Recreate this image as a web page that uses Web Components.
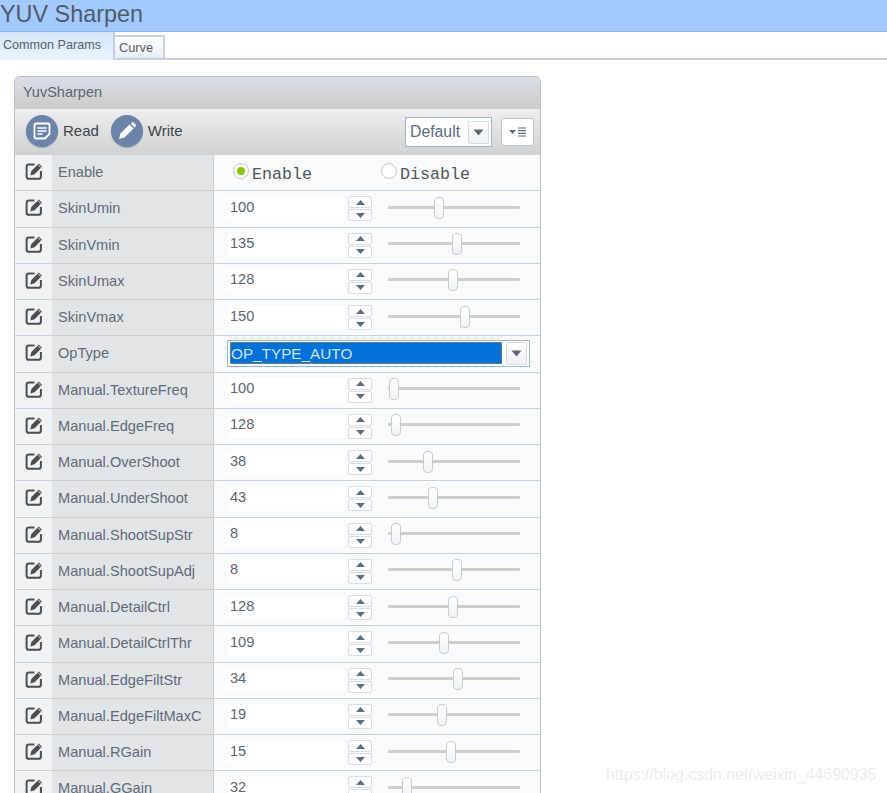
<!DOCTYPE html>
<html><head><meta charset="utf-8"><title>YUV Sharpen</title>
<style>
html,body{margin:0;padding:0;height:793px;overflow:hidden;background:#fff;font-family:"Liberation Sans",Arial,sans-serif}
</style></head><body>
<yuv-app></yuv-app>
<script>
const def=(name,css,html)=>{customElements.define(name,class extends HTMLElement{connectedCallback(){if(this.shadowRoot)return;const r=this.attachShadow({mode:'open'});const get=a=>this.getAttribute(a)||'';r.innerHTML='<style>'+css+'</style>'+(typeof html==='function'?html(get):html);}});};
const editIcon='<svg width="20" height="20" viewBox="0 0 20 20"><path d="M10.500 3.600H5A2.400 2.400 0 0 0 2.600 6v9.400A2.400 2.400 0 0 0 5 17.800h9.500a2.400 2.400 0 0 0 2.400-2.400V10" fill="none" stroke="#4a4f57" stroke-width="2"/><path d="M6.300 14.400l1-4.300L14.800 2.600l3.200 3.200-7.400 7.500z" fill="#4a4f57"/><path d="M14 3.700l3 3" stroke="#fff" stroke-width=".8"/></svg>';

def('title-bar',`:host{display:flex;align-items:center;height:32px;box-sizing:border-box;background:#a2caff;border-bottom:1px solid #8fb6e8;color:#4f5b6b;font-size:23.400px;line-height:28px;padding-bottom:3px}`,'<slot></slot>');

def('tab-item',`:host{display:flex;align-items:center;box-sizing:border-box;font-size:12.600px;color:#56606c}
:host([active]){width:115px;height:28px;padding:0 0 3px 3px;background:linear-gradient(#d4e6fb,#eaf4ff);border-right:2px solid #c3cfdf}
:host(:not([active])){width:50px;height:23px;margin-top:3px;padding:0 0 0 4px;font-size:12.800px;background:linear-gradient(#fff,#e9edf2);border:2px solid #c9d3e2;border-bottom:0;border-left:0}`,'<slot></slot>');

def('tab-bar',`:host{display:flex;align-items:flex-start;height:28px;box-sizing:border-box;border-bottom:2px solid #c5d0e2}`,'<slot></slot>');

def('tool-button',`:host{display:flex;align-items:center;gap:5px;font-size:15px;color:#3f444b}
.c{width:32px;height:32px;border-radius:50%;background:#6d84aa;display:flex;align-items:center;justify-content:center;box-shadow:0 1px 1px #9aa}
.l{position:relative;top:-1px}`,
g=>`<span class="c">${g('icon')==='read'
?'<svg width="18" height="18" viewBox="0 0 18 18"><path d="M3 1.500h12a1.500 1.500 0 0 1 1.500 1.500v9l-4.500 4.500H3A1.500 1.500 0 0 1 1.500 15V3A1.500 1.500 0 0 1 3 1.500z" fill="none" stroke="#fff" stroke-width="1.800"/><path d="M4.500 6h9M4.500 9h9M4.500 12h5" stroke="#fff" stroke-width="1.500"/></svg>'
:'<svg width="20" height="20" viewBox="0 0 20 20"><path d="M2 18l1.500-5.500L12.500 3.500l4 4-9 9z" fill="#fff"/><path d="M13.600 2.400l1.400-1.200a1 1 0 0 1 1.300 0l2.500 2.500a1 1 0 0 1 0 1.300l-1.200 1.400z" fill="#fff"/></svg>'}</span><span class="l"><slot></slot></span>`);

const caret=`<svg width="11" height="7" viewBox="0 0 11 7"><path d="M.5.500h10L5.500 6.500z" fill="#59677a"/></svg>`;

def('drop-box',`:host{display:flex;align-items:center;box-sizing:border-box;border:1px solid #9db5d3;background:#fff;padding:2px;color:#5a6c82;font-size:15.800px}
.t{flex:1;padding-left:2px;line-height:22px;height:22px;white-space:nowrap;overflow:hidden}
:host([selected]) .t{background:#0071d8;color:#cfe4f8;outline:1px dotted #c8882a;outline-offset:-1px;font-size:15.300px;margin-right:4px;line-height:24px;padding-left:1px}
.b{width:21px;height:23px;box-sizing:border-box;border:1px solid #d6dbe2;border-radius:2px;background:linear-gradient(#fff,#eef0f3);display:flex;align-items:center;justify-content:center}`,
`<span class="t"><slot></slot></span><span class="b">${caret}</span>`);

def('menu-button',`:host{display:flex;align-items:center;justify-content:center;gap:2px;width:33px;height:28px;box-sizing:border-box;border:1px solid #bcc3cc;border-radius:3px;background:#fff}`,
`<svg width="20" height="10" viewBox="0 0 20 10"><path d="M1 3h7L4.500 7z" fill="#5c6c82"/><path d="M10 1h8M10 3.700h8M10 6.300h8M10 9h8" stroke="#5c6c82" stroke-width="1.200"/></svg>`);

def('radio-opt',`:host{display:flex;align-items:center;font-family:"Liberation Mono",monospace;font-size:16.670px;color:#4e565e;height:22px}
.r{width:16px;height:16px;box-sizing:border-box;border-radius:50%;border:1px solid #c2c6cb;background:#fff;margin-right:3px;display:flex;align-items:center;justify-content:center;flex:none;position:relative;top:-2px}
:host([checked]) .r::after{content:"";width:8px;height:8px;border-radius:50%;background:#8cc400}
.l{position:relative;top:2px}`,
'<span class="r"></span><span class="l"><slot></slot></span>');

def('spin-box',`:host{display:flex;flex-direction:column;gap:1px;width:24px;flex:none}
.s{height:12px;box-sizing:border-box;border:1px solid #d6dde7;border-radius:2px;background:#fff;display:flex;align-items:center;justify-content:center}
svg{display:block}`,
`<span class="s"><svg width="9" height="5" viewBox="0 0 9 5"><path d="M4.500 0L9 5H0z" fill="#5f6d80"/></svg></span><span class="s"><svg width="9" height="5" viewBox="0 0 9 5"><path d="M0 0h9L4.500 5z" fill="#5f6d80"/></svg></span>`);

def('range-slider',`:host{display:block;position:relative;width:132px;height:24px;flex:none}
.track{position:absolute;left:0;right:0;top:9px;height:3px;background:#cfcfc7;border-radius:1px}
.thumb{position:absolute;top:0;width:10px;height:22px;margin-left:-5px;box-sizing:border-box;border:1px solid #c4ccd6;border-radius:4px;background:linear-gradient(#fff,#f0f2f5)}`,
g=>`<div class="track"></div><div class="thumb" style="left:${g('at')}px"></div>`);

def('param-row',`:host{display:flex;height:36.250px;box-sizing:border-box;border-bottom:1px solid #c6d0de;flex:none}
.ic{width:37px;flex:none;background:#f1f2f3;display:flex;align-items:center;justify-content:center;padding:0 0 3px 1px;box-sizing:border-box}
.lb{width:162px;flex:none;box-sizing:border-box;padding:0 0 1px 6px;background:#e2e5e7;border-right:1px solid #c6d0de;color:#5f6a7a;font-size:14.600px;display:flex;align-items:center;white-space:nowrap;overflow:hidden}
.v{flex:1;min-width:0;background:#f9fafc;display:flex;align-items:center;padding-left:14px;box-sizing:border-box}`,
g=>`<span class="ic">${editIcon}</span><span class="lb">${g('label')}</span><span class="v"><slot></slot></span>`);

def('num-field',`:host{display:flex;align-items:center;gap:16px}
.i{width:117px;height:24px;box-sizing:border-box;padding:0 0 4px 2px;background:#fff;font-size:14.600px;color:#5a6470;display:flex;align-items:center;margin-right:-13px}`,
g=>`<span class="i">${g('value')}</span><spin-box></spin-box><range-slider at="${g('at')}"></range-slider>`);

def('param-panel',`:host{display:block;width:527px;margin:16px 0 0 14px;box-sizing:border-box;border:1px solid #b9bfc8;border-bottom:0;border-radius:6px 6px 0 0;overflow:hidden}
.h{height:32px;box-sizing:border-box;padding:0 0 3px 8px;display:flex;align-items:center;background:linear-gradient(#dcdee6,#c9cbce);color:#5c6570;font-size:14.500px}
.t{height:46px;box-sizing:border-box;display:flex;align-items:center;padding:0 6px 2px 11px;background:linear-gradient(#eeeeee,#cfd1d2);gap:12px}
.sp{flex:1}`,
`<div class="h">YuvSharpen</div><div class="t"><tool-button icon="read">Read</tool-button><tool-button icon="write">Write</tool-button><span class="sp"></span><drop-box style="width:87px;height:30px;margin-top:2px">Default</drop-box><menu-button style="margin:2px 0 0 -3px"></menu-button></div><slot></slot>`);

const rows=[["SkinUmin",100,51],["SkinVmin",135,69],["SkinUmax",128,65],["SkinVmax",150,77],null,["Manual.TextureFreq",100,6],["Manual.EdgeFreq",128,8],["Manual.OverShoot",38,40],["Manual.UnderShoot",43,45],["Manual.ShootSupStr",8,8],["Manual.ShootSupAdj",8,69],["Manual.DetailCtrl",128,65],["Manual.DetailCtrlThr",109,56],["Manual.EdgeFiltStr",34,70],["Manual.EdgeFiltMaxC",19,54],["Manual.RGain",15,63],["Manual.GGain",32,19]];
const rowHtml=rows.map(r=>r?`<param-row label="${r[0]}"><num-field value="${r[1]}" at="${r[2]}"></num-field></param-row>`:`<param-row label="OpType"><drop-box selected style="width:303px;height:27px;margin:-1px 0 0 -1px">OP_TYPE_AUTO</drop-box></param-row>`).join('');

def('yuv-app',`:host{display:block;position:relative;height:793px;overflow:hidden}
.wm{position:absolute;left:606px;top:766px;font-size:15.900px;color:#ececec;white-space:nowrap}
.en{display:flex;gap:69px;padding-left:5px}`,
`<title-bar>YUV Sharpen</title-bar>
<tab-bar><tab-item active>Common Params</tab-item><tab-item>Curve</tab-item></tab-bar>
<param-panel>
<param-row label="Enable"><span class="en"><radio-opt checked>Enable</radio-opt><radio-opt>Disable</radio-opt></span></param-row>
${rowHtml}
</param-panel>
<div class="wm">https://blog.csdn.net/weixin_44690935</div>`);
</script>
</body></html>
